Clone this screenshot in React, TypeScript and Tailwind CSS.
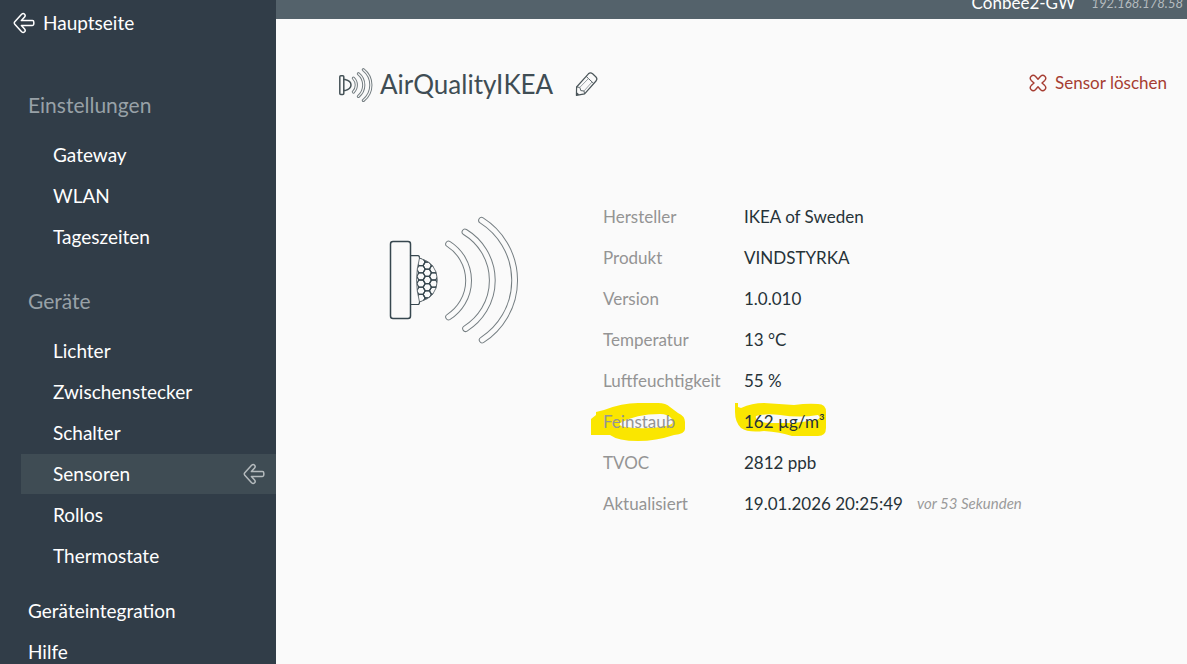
import { ReactNode } from "react";

const SETTINGS = ["Gateway", "WLAN", "Tageszeiten"];
const DEVICES = ["Lichter", "Zwischenstecker", "Schalter", "Sensoren", "Rollos", "Thermostate"];
const MORE = ["Geräteintegration", "Hilfe"];

const ROWS = [
  { label: "Hersteller", value: "IKEA of Sweden" },
  { label: "Produkt", value: "VINDSTYRKA" },
  { label: "Version", value: "1.0.010" },
  { label: "Temperatur", value: "13 °C" },
  { label: "Luftfeuchtigkeit", value: "55 %" },
  { label: "Feinstaub", value: "162 µg/m³", marked: true },
  { label: "TVOC", value: "2812 ppb" },
  { label: "Aktualisiert", value: "19.01.2026 20:25:49", note: "vor 53 Sekunden" },
];

function ArrowLeft({ className = "" }: { className?: string }) {
  return (
    <svg
      viewBox="0 0 22 22"
      className={`size-[22px] shrink-0 ${className}`}
      fill="none"
      stroke="currentColor"
      strokeWidth="1.5"
      strokeLinejoin="round"
    >
      <path d="M1.8 9.8 L8.6 2.2 Q10.2 0.8 11.6 2.2 Q12.8 3.6 11.6 5 L8.4 8.6 H19.4 Q20.8 8.6 20.8 10 V12 Q20.8 13.4 19.4 13.4 H8.4 L11.6 17 Q12.8 18.4 11.6 19.8 Q10.2 21.2 8.6 19.8 L1.8 12.2 Q0.8 11 1.8 9.8 Z" />
    </svg>
  );
}

function PencilIcon() {
  return (
    <svg viewBox="0 0 24 26" className="h-[26px] w-6" fill="none" stroke="#4a5559" strokeWidth="1.2" strokeLinejoin="round">
      <path d="M1.4 24.4 L1.6 16 L13.4 2.8 Q15.4 1 17.6 2.8 L21 6 Q22.8 8 21 10 L9.6 22.8 Z" />
      <path d="M1.6 16 L4.8 16.4 L5.8 19.6 L9 20 L9.6 22.8 M11.2 5.4 L18.6 12.4" strokeWidth="0.9" />
      <path d="M4.8 16.4 L13.6 7.4 M9 20 L17 11" stroke="#90999d" strokeWidth="0.9" />
      <path d="M1.4 24.4 L2 21.4 L4.4 23.6 Z" fill="#4a5559" stroke="none" />
    </svg>
  );
}

function CrossIcon() {
  return (
    <svg viewBox="0 0 18 18" className="size-[18px]" fill="none" stroke="currentColor" strokeWidth="1.4" strokeLinejoin="round">
      <path d="M9 5.2 L11.6 2.2 Q13.8 0.2 15.8 2.2 Q17.8 4.2 15.8 6.4 L13 9 L15.8 11.6 Q17.8 13.8 15.8 15.8 Q13.8 17.8 11.6 15.8 L9 12.8 L6.4 15.8 Q4.2 17.8 2.2 15.8 Q0.2 13.8 2.2 11.6 L5 9 L2.2 6.4 Q0.2 4.2 2.2 2.2 Q4.2 0.2 6.4 2.2 Z" />
    </svg>
  );
}

// A rounded arc drawn as an outline: dark stroke with a lighter one on top.
function Wave({ d, width }: { d: string; width: number }) {
  return (
    <>
      <path d={d} stroke="#757e82" strokeWidth={width} />
      <path d={d} stroke="#fafafa" strokeWidth={width - 2} />
    </>
  );
}

function SensorIcon() {
  return (
    <svg viewBox="8 11 36 36" className="size-9 shrink-0" fill="none" strokeLinecap="round">
      <rect x="9.8" y="20.8" width="4" height="18.6" rx="1" stroke="#455257" strokeWidth="1.5" />
      <path d="M13.8 24.6 H15 Q21 26 21 30 Q21 34 15 35.6 H13.8" stroke="#455257" strokeWidth="1.5" />
      <Wave d="M23.4 23.2 A9.6 9.6 0 0 1 23.4 37" width={3.2} />
      <Wave d="M28.4 18.8 A14.6 14.6 0 0 1 28.4 41.4" width={3.2} />
      <Wave d="M33.4 14.8 A19.4 19.4 0 0 1 33.4 45.4" width={3.2} />
    </svg>
  );
}

const HEXES = [46, 52.3, 58.6].flatMap((x, col) =>
  [0, 1, 2, 3, 4, 5, 6].map((i) => ({ x, y: (col === 1 ? 53.4 : 49.8) + i * 7.2 })),
);

const hexPoints = (x: number, y: number) =>
  [0, 60, 120, 180, 240, 300]
    .map((a) => `${x + 4.2 * Math.cos((a * Math.PI) / 180)},${y + 4.2 * Math.sin((a * Math.PI) / 180)}`)
    .join(" ");

function SensorDrawing() {
  const dome = "M44.5 53 Q62.3 58 62.3 75 Q62.3 92 44.5 97 Q38.5 75 44.5 53 Z";
  return (
    <svg viewBox="14 10 130 130" className="size-[130px] shrink-0" fill="none" strokeLinecap="round">
      <clipPath id="dome">
        <path d={dome} />
      </clipPath>
      <rect x="15.5" y="36.6" width="20" height="77" rx="2.5" stroke="#37474f" strokeWidth="1.5" />
      <path d="M35.5 50.6 H43 Q44.5 50.6 44.5 53 M35.5 99.5 H43 Q44.5 99.5 44.5 97" stroke="#37474f" strokeWidth="1.2" />
      <g clipPath="url(#dome)" stroke="#37474f" strokeWidth="1.2">
        {HEXES.map((h) => (
          <polygon key={`${h.x}-${h.y}`} points={hexPoints(h.x, h.y)} />
        ))}
      </g>
      <path d={dome} stroke="#5d686d" strokeWidth="0.9" />
      <Wave d="M73.6 39 A43.3 43.3 0 0 1 73.6 112" width={6.8} />
      <Wave d="M90 27 A56.7 56.7 0 0 1 90.6 123.6" width={6.8} />
      <Wave d="M106.6 15.4 A71 71 0 0 1 107.2 135" width={6.8} />
    </svg>
  );
}

function LabelMark() {
  return (
    <svg viewBox="0 0 96 40" className="absolute -left-[13px] top-px h-10 w-24" fill="#fae600">
      <path
        fillRule="evenodd"
        d="M1 17 L6 13 V10 L14 8 Q32 1 48 1 H68 Q76 1 80 5 L88 11 Q95 14 95 20 V27 Q95 32 84 33 Q66 39 48 39 Q28 39 20 33 H1 Z M30 21 Q46 12 70 12 Q78 12 82 17 Q86 22 76 24 Q56 28 36 25 Q28 24 30 21 Z"
      />
    </svg>
  );
}

function ValueMark() {
  return (
    <svg viewBox="0 0 94 36" className="absolute -left-[10px] top-px h-9 w-[94px]" fill="#fae600">
      <path
        fillRule="evenodd"
        d="M1 1 H4 V5 L7 6 Q18 1 30 1 L60 3 Q74 1 84 2 Q92 2 92 10 V26 Q92 34 84 34 H58 Q46 30 30 29 Q14 31 7 26 Q1 20 1 10 Z M22 14 Q32 11 46 13 Q66 16 84 13 Q88 16 82 18 L60 21 H36 Q20 20 22 14 Z"
      />
    </svg>
  );
}

function NavHeading({ children }: { children: ReactNode }) {
  return <h2 className="flex h-10 items-center pl-7 text-[21px] text-[#98a1a7]">{children}</h2>;
}

function NavList({ items, active }: { items: string[]; active?: string }) {
  return (
    <ul className="mt-2.5 flex flex-col gap-px pl-[21px]">
      {items.map((item) => (
        <li key={item}>
          <a
            href="#"
            className={`flex h-10 items-center justify-between pl-8 pr-[11px] ${item === active ? "bg-[#3f4c54]" : ""}`}
          >
            {item}
            {item === active && <ArrowLeft className="text-[#b4babd]" />}
          </a>
        </li>
      ))}
    </ul>
  );
}

export default function App() {
  return (
    <div className="flex h-screen overflow-hidden bg-[#fafafa] font-['Lato',sans-serif]">
      <nav className="w-[276px] shrink-0 overflow-hidden bg-[#313d48] text-[19px] text-white">
        <a href="#" className="flex h-[46px] items-center gap-2 pl-[13px]">
          <ArrowLeft />
          Hauptseite
        </a>
        <div className="mt-[39px]">
          <NavHeading>Einstellungen</NavHeading>
          <NavList items={SETTINGS} />
        </div>
        <div className="mt-6">
          <NavHeading>Geräte</NavHeading>
          <NavList items={DEVICES} active="Sensoren" />
        </div>
        <ul className="mt-[15px] flex flex-col gap-px">
          {MORE.map((item) => (
            <li key={item}>
              <a href="#" className="flex h-10 items-center pl-7">
                {item}
              </a>
            </li>
          ))}
        </ul>
      </nav>

      <div className="min-w-0 flex-1">
        <header className="flex h-[19px] items-end justify-end gap-4 overflow-hidden bg-[#54626b] pb-1 pr-1">
          <span className="text-[17px] leading-6 text-white">Conbee2-GW</span>
          <span className="text-[13px] leading-6 italic text-[#b4bbbf]">192.168.178.58</span>
        </header>

        <main className="pl-[62px] pr-5 pt-[45px]">
          <div className="flex h-10 items-center">
            <SensorIcon />
            <h1 className="ml-1.5 text-[26px] text-[#3f4d54]">AirQualityIKEA</h1>
            <button type="button" aria-label="Umbenennen" className="ml-[22px]">
              <PencilIcon />
            </button>
            <button type="button" className="ml-auto flex items-center gap-2 pb-0.5 text-[17px] text-[#a63d32]">
              <CrossIcon />
              Sensor löschen
            </button>
          </div>

          <div className="mt-[92px] flex items-start pl-[51px]">
            <div className="pt-[19px]">
              <SensorDrawing />
            </div>
            <table className="ml-[84px] text-left text-[17px] text-[#263238]">
              <tbody>
                {ROWS.map((row) => (
                  <tr key={row.label} className="h-[41px]">
                    <th scope="row" className="w-[141px] p-0 font-normal text-[#949494]">
                      <div className="relative flex h-[41px] items-center">
                        {row.marked && <LabelMark />}
                        <span className="relative">{row.label}</span>
                      </div>
                    </th>
                    <td className="p-0">
                      <div className="relative flex h-[41px] items-center">
                        {row.marked && <ValueMark />}
                        <span className="relative">{row.value}</span>
                        {row.note && <span className="ml-3.5 text-[15px] italic text-[#9a9a9a]">{row.note}</span>}
                      </div>
                    </td>
                  </tr>
                ))}
              </tbody>
            </table>
          </div>
        </main>
      </div>
    </div>
  );
}
